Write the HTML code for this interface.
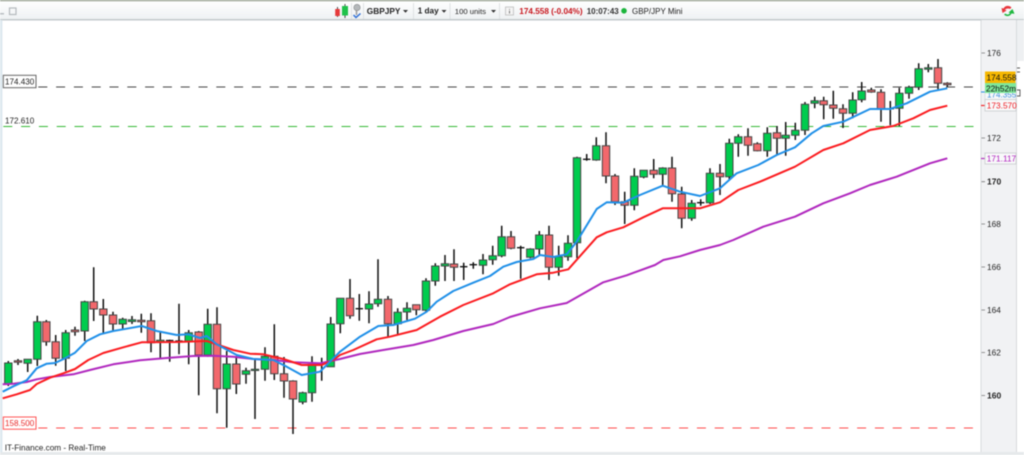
<!DOCTYPE html>
<html><head><meta charset="utf-8"><title>GBP/JPY</title>
<style>
html,body{margin:0;padding:0;background:#fff;width:1024px;height:455px;overflow:hidden}
svg{display:block;filter:blur(.45px)}
text{font-family:"Liberation Sans",sans-serif;font-size:8.100px;fill:#222}
.b{font-weight:bold}
</style></head><body>
<svg width="1024" height="455" viewBox="0 0 1024 455" xmlns="http://www.w3.org/2000/svg">
<defs><linearGradient id="g" x1="0" y1="0" x2="0" y2="1"><stop offset="0" stop-color="#fff"/><stop offset="1" stop-color="#eef1f3"/></linearGradient></defs>
<rect width="1024" height="455" fill="#fff"/>
<!-- toolbar -->
<rect x="0" y="0" width="1024" height="20" fill="url(#g)"/>
<rect x="0" y="0" width="1024" height="1.2" fill="#8f9a88"/>
<rect x="0" y="19" width="1024" height="1.5" fill="#c3c9cc"/>
<rect x="0" y="13" width="4" height="1.5" fill="#b9bfc2"/>
<rect x="9.5" y="8" width="6.5" height="6.5" fill="none" stroke="#b5babd" stroke-width="1.2"/>
<rect x="1017" y="20" width="7" height="41" fill="#eef0f2"/>
<!-- left strip / axis -->
<rect x="0" y="20" width="2.4" height="435" fill="#dde8ef"/>
<rect x="981" y="20" width="35.5" height="432" fill="#f1f2f4"/>
<path d="M981 20V452M1016.5 20V452" stroke="#cfd3d6" stroke-width=".8" fill="none"/>
<rect x="0" y="452" width="1024" height="3" fill="#e6e9eb"/>
<path d="M1017 68h3M1017 72h3M1017 90h3v6h-3" stroke="#555" stroke-width=".9" fill="none"/>
<!-- toolbar items -->
<path d="M337.500 7V17M345 4V18" stroke="#333" stroke-width=".9"/>
<rect x="335.200" y="9" width="4.600" height="7" fill="#e63a3a"/>
<rect x="342" y="6" width="6" height="9.500" fill="#1fc24a"/>
<path d="M351.500 3V19M363.500 3V19M413.500 3V19M450 3V19M499.500 3V19" stroke="#d9dcde" stroke-width=".8"/>
<circle cx="357" cy="7.500" r="3.200" fill="#b4b8ba" stroke="#8a8e90" stroke-width=".6"/>
<path d="M356.500 10V15" stroke="#999" stroke-width="1.500"/>
<path d="M353.500 15l2.500 2.500 4.500-4" stroke="#2f6fd6" stroke-width="1.500" fill="none"/>
<text x="366.800" y="13.800" class="b" style="font-size:8.300px">GBPJPY</text>
<path d="M403 10h5l-2.500 2.800z" fill="#333"/>
<text x="417.700" y="13.500" class="b" style="font-size:8.200px">1 day</text>
<path d="M441.500 10h5l-2.500 2.800z" fill="#333"/>
<text x="454.800" y="13.800" style="font-size:7.700px">100 units</text>
<path d="M491 10h5l-2.500 2.800z" fill="#333"/>
<rect x="505.500" y="7" width="8" height="8" fill="#f4f4f4" stroke="#b5b5b5" stroke-width=".7"/>
<path d="M509.500 9V9.800M509.500 10.800V13.500" stroke="#777" stroke-width="1"/>
<text x="519.300" y="13.800" class="b" style="font-size:8.200px;fill:#c8161d">174.558 (-0.04%)</text>
<text x="586.700" y="13.800" class="b" style="font-size:8px;fill:#333">10:07:43</text>
<circle cx="624" cy="10.800" r="2.800" fill="#1cb53c"/>
<text x="632" y="13.800" style="font-size:8px">GBP/JPY Mini</text>
<path d="M1011.500 7.500C1009 5 1005 5.500 1003.500 8.500L1001.500 8l1 5 4.200-2.500-1.800-.8C1006 8.500 1008.500 8 1010 9z" fill="#e8373c"/>
<path d="M1004 14.500C1006.500 17 1010 16.500 1011.500 13.500L1014.500 13.800 1012.500 9 1008.500 12.500l1.500.5C1009 14.800 1007 15 1005.500 13.500z" fill="#20b840"/>
<!-- dashed levels -->
<path d="M38.300 87H976" stroke="#444" stroke-width="1.100" stroke-dasharray="9 8.800" fill="none"/>
<path d="M3.300 126.500H976" stroke="#35b835" stroke-width="1.100" stroke-dasharray="9 8.800" fill="none"/>
<path d="M38.300 428H976" stroke="#ff4a4a" stroke-width="1.100" stroke-dasharray="9 8.800" fill="none"/>
<rect x="3.300" y="75.300" width="32.700" height="12.400" fill="#fff" stroke="#666" stroke-width="1"/>
<text x="5" y="84.500">174.430</text>
<text x="5" y="123.500">172.610</text>
<rect x="3.300" y="417" width="32.700" height="12.200" fill="#fff" stroke="#f55" stroke-width="1"/>
<text x="5" y="426.200" style="fill:#e82a2a">158.500</text>
<text x="4.700" y="450.600" style="font-size:8.200px">IT-Finance.com - Real-Time</text>
<!-- wicks -->
<path fill="none" stroke="#111" stroke-width="1.500" d="M8.300 361V386M18 359V365M27.700 359V372M37.300 315.700V366M46.300 320V345.700M55.700 335V365.700M65.700 330V371M75 326.700V335.700M84.700 300.700V341M93.700 267.300V321M103.300 299V333.300M113 311.700V331M122.700 317.700V329M132 316V324M141.300 313.700V332.700M151 313.300V352.300M160.300 332.300V359M169.700 339.700V361.700M179 303.700V354.300M188.700 330V364.300M198.700 331V395.300M207.700 308.700V356.700M217 307.300V413.300M226.700 351V427.700M236.300 356V394M246 367.700V383.700M255 358.300V419M265 347.300V380.700M274.300 324.300V380M284 357V397.700M293 380.300V434M302.700 391.700V404.300M312 356.300V401.700M321.700 357.700V380.700M330.700 317V367M340.300 298V333.300M350 279V318.700M359.300 294V320.700M369 291.300V323.300M378 259.300V306.700M388 296V337.300M397.700 308.300V334.300M407 302.300V320M416.300 304.700V315.300M426 278.300V311.700M435.300 263.300V285.700M445 255V281M454 249.300V281M463.700 262.700V280M473.300 262.300V268.700M483 254V274.300M492.700 245.700V264.700M501.700 225.700V257.300M511 231V249.300M520.700 245.700V278.700M530.300 248.300V258.300M539.300 231V255M549 225.700V280M558.700 245.700V275.700M568 235.300V260.700M577 156.700V258.300M586.700 154V160.700M596.300 137.300V160.700M606 132.300V183.300M615 174V205M624.700 191.700V224M634.300 168.300V210.300M643.700 170V178.300M653.700 159V178.300M662.700 167.300V185.300M672 156.700V201.700M681.700 186.700V228.300M691.700 200V220.700M700.700 199.300V205.700M710 168.300V204M720 164V195M729.300 138.700V180M738.300 134.300V156.700M748 128.300V155.700M757.300 142.300V151.300M767.300 127.300V156.700M777 126V155M785.700 122V155.700M795.300 122.700V140M805 102V135M814.700 96.700V108.300M823.700 96.700V119.300M833.300 90.700V118.700M843 104.300V128M852.700 92.300V118.300M861.700 82V102.300M871.300 87.700V92.700M881 89.300V121.700M890.300 101V125.300M899.300 87.700V126M909 85.700V98.700M918.700 63.300V90M928.300 64V72.300M938 59V89.300M947.300 82.300V86.700"/>
<!-- doji -->
<path fill="none" stroke="#111" stroke-width="1.300" d="M166 340.500h7.400M175.300 341h7.400M318 363.500h7.400M355.600 308.700h7.400M460 266.700h7.400M469.600 264.700h7.400M517 247.700h7.400M583 159.300h7.400M697 202.700h7.400M886.600 108.700h7.400"/>
<!-- green bodies -->
<path fill="#00cc4e" stroke="#444" stroke-width="1" d="M4.600 363h7.400V384h-7.400zM24 359.300h7.400V363.300h-7.400zM33.600 321.700h7.400V359.300h-7.400zM62 332.700h7.400V358.300h-7.400zM81 301.700h7.400V331h-7.400zM119 319.300h7.400V324h-7.400zM128.300 319.700h7.400V321.500h-7.400zM156.600 340.300h7.400V342.300h-7.400zM185 332.700h7.400V341h-7.400zM204 324.300h7.400V355h-7.400zM223 364h7.400V388.700h-7.400zM242.300 370.700h7.400V374.300h-7.400zM251.300 369.300h7.400V370.500h-7.400zM261.300 356.300h7.400V369.300h-7.400zM299 392.700h7.400V402h-7.400zM308.300 364.300h7.400V392.700h-7.400zM327 324h7.400V366.700h-7.400zM336.600 298.300h7.400V323.700h-7.400zM365.300 304h7.400V309h-7.400zM374.300 299.300h7.400V303.700h-7.400zM394 312.300h7.400V323.700h-7.400zM403.300 308.300h7.400V312h-7.400zM422.300 281h7.400V310.300h-7.400zM431.600 266h7.400V281h-7.400zM441.300 263.700h7.400V266h-7.400zM479.300 260h7.400V265.300h-7.400zM489 255.700h7.400V259.700h-7.400zM498 236.700h7.400V255.700h-7.400zM526.600 249h7.400V257.300h-7.400zM535.600 235h7.400V249h-7.400zM555 256.700h7.400V267.300h-7.400zM564.300 243.300h7.400V256.700h-7.400zM573.300 157.700h7.400V242.700h-7.400zM592.600 145.700h7.400V160h-7.400zM630.600 176.300h7.400V205.300h-7.400zM640 170.300h7.400V177h-7.400zM659 168h7.400V174.300h-7.400zM688 203.300h7.400V218.300h-7.400zM706.300 173.300h7.400V202.700h-7.400zM725.600 143.300h7.400V176.700h-7.400zM734.600 136.700h7.400V143.300h-7.400zM763.600 133.300h7.400V150.700h-7.400zM782 135.300h7.400V138.300h-7.400zM791.600 130.300h7.400V135.300h-7.400zM801.300 104.300h7.400V130.300h-7.400zM811 100.700h7.400V103.300h-7.400zM849 100h7.400V113.300h-7.400zM858 91h7.400V99.700h-7.400zM895.600 93.300h7.400V108.300h-7.400zM905.300 87.300h7.400V93.300h-7.400zM915 68.700h7.400V87.300h-7.400zM924.600 67.700h7.400V69.300h-7.400z"/>
<!-- red bodies -->
<path fill="#f2686c" stroke="#444" stroke-width="1" d="M14.300 360.700h7.400V362.300h-7.400zM42.600 321.700h7.400V341.700h-7.400zM52 341.700h7.400V358.300h-7.400zM71.300 330h7.400V331.700h-7.400zM90 301.700h7.400V309h-7.400zM99.600 309h7.400V315h-7.400zM109.300 315h7.400V324h-7.400zM137.600 320.300h7.400V321.700h-7.400zM147.300 320.700h7.400V342.700h-7.400zM195 332h7.400V355h-7.400zM213.300 324.300h7.400V388.700h-7.400zM232.600 364h7.400V384h-7.400zM270.600 356.300h7.400V373.700h-7.400zM280.300 373.700h7.400V381h-7.400zM289.300 381h7.400V399h-7.400zM346.300 298.300h7.400V315.700h-7.400zM384.300 299.300h7.400V323.700h-7.400zM412.600 304.700h7.400V309.700h-7.400zM450.300 264h7.400V267.300h-7.400zM507.300 236.700h7.400V248.300h-7.400zM545.300 235h7.400V267.300h-7.400zM602.300 145.700h7.400V176h-7.400zM611.300 176h7.400V201.700h-7.400zM621 201.700h7.400V205.300h-7.400zM650 170.300h7.400V174.300h-7.400zM668.300 168h7.400V193.700h-7.400zM678 194h7.400V218.300h-7.400zM716.300 173.300h7.400V176.700h-7.400zM744.300 136.700h7.400V145.300h-7.400zM753.600 143.700h7.400V150.700h-7.400zM773.300 132.700h7.400V138.300h-7.400zM820 100.700h7.400V104.700h-7.400zM829.600 105h7.400V108.300h-7.400zM839.300 108.700h7.400V113.300h-7.400zM867.600 90h7.400V92h-7.400zM877.300 92.300h7.400V109h-7.400zM934.300 67.700h7.400V83.300h-7.400zM943.600 83.300h7.400V84.700h-7.400z"/>
<!-- averages -->
<path fill="none" stroke="#b028be" stroke-width="2" stroke-linejoin="round" d="M2.700 384.300L13.300 383.700 26.700 382 36.700 379.300 50 377 73.300 374.300 90 370 113.300 364.300 140 360.300 166.700 358 193.300 356 213.300 355.700 233.300 356.700 253.300 359 273.300 360 293.300 362.300 320 363.300 340 359 360 354 383.300 350 413.300 345 433.300 340 463.300 331 493.300 324 510 317 540 308.300 566.700 303 603.300 282.300 626.700 275.300 655 265 663.300 260 680 256.300 700 250 720 245 733.300 240 763.300 226.700 795 216.700 823.300 203.300 850 193.300 870 185 896.700 176.700 930 163.300 947.300 158.300"/>
<path fill="none" stroke="#fb1c20" stroke-width="2" stroke-linejoin="round" d="M2.700 398.300L16.700 394.300 30 390 36.700 384 50 377.700 63.300 373.300 75 369 88.300 360 103.300 353 123.300 347.300 141.700 342.300 176.700 342 206.700 341 216.700 344.300 233.300 350 250 353.700 263.300 354.300 283.300 359 301.700 365 321.700 365 333.300 360 340 355 353.300 350 376.700 339.300 390 336.700 416.700 330 440 316.700 463.300 305 493.300 293.300 510 284.300 536.700 274.300 553.300 272.700 568.300 269.300 596.700 237.300 606.700 232.300 623.300 227.300 643.300 217.300 662.700 208.300 700 208.300 720 202.300 738.300 190 760 181.700 795 166.700 823.300 150 843.300 143.300 870 130 893.300 126 913.300 118.300 930 110 947.300 105.700"/>
<path fill="none" stroke="#2090e8" stroke-width="2" stroke-linejoin="round" d="M2.700 391.700L13.300 386.300 26.700 380.300 36.700 368.300 46.700 363.700 55 363 65 358.300 75 352.700 86.700 341 100 334.300 113.300 331 126.700 328.700 141.700 326 156.700 331 176.700 335 188.300 334.300 200 338 206.700 336 216.700 344.300 236.700 355 253.300 359 273.300 360 286.700 366.700 301.700 375 320 371.700 328.300 363.300 340 351.700 346.700 346.700 360 336.700 378.300 326 393.300 325 415 318.700 426.700 311.700 436.700 301.700 453.300 291 473.300 282.700 490 276 503.300 266.700 516.700 262 533.300 259 540 255 553.300 257 566.700 254.300 576.700 241.700 596.700 209 606.700 202.300 623.300 202.700 640 195 662.700 185.700 680 191.700 700 196 720 188.300 736.700 173.300 758.300 165 776.700 155 795 147.300 811.700 133.300 823.300 126 843.300 121.700 870 109 890 109 906.700 103.300 930 91.700 947.300 88.300"/>
<!-- axis labels -->
<path d="M981.500 53h3.500M981.500 138h3.500M981.500 181.700h3.500M981.500 224h3.500M981.500 267h3.500M981.500 310h3.500M981.500 352.500h3.500M981.500 395.500h3.500" stroke="#777" stroke-width=".8"/>
<text x="987" y="55.800" style="font-size:8.300px">176</text>
<text x="987" y="140.800" style="font-size:8.300px">172</text>
<text x="987" y="184.700" class="b" style="font-size:8.500px">170</text>
<text x="987" y="226.800" style="font-size:8.300px">168</text>
<text x="987" y="269.800" style="font-size:8.300px">166</text>
<text x="987" y="312.800" style="font-size:8.300px">164</text>
<text x="987" y="355.300" style="font-size:8.300px">162</text>
<text x="987" y="398.500" class="b" style="font-size:8.500px">160</text>
<path d="M981 92h4" stroke="#2a90e4" stroke-width="1"/>
<path d="M981 105.500h4" stroke="#f52528" stroke-width="1.200"/>
<path d="M981 158.500h4" stroke="#b234bd" stroke-width="1.200"/>
<rect x="985" y="90" width="31" height="9.500" fill="#f7f8f9" stroke="#cfd2d4" stroke-width=".6"/>
<text x="987" y="97.500" style="fill:#3d8fdc">174.355</text>
<rect x="985" y="71.500" width="30.500" height="11.500" fill="#f6b800"/>
<text x="986.500" y="80.300" style="font-size:8.300px;fill:#111">174.558</text>
<rect x="985" y="83" width="31" height="10" fill="#7fe89a"/>
<text x="986" y="91.300" style="font-size:8.300px;fill:#111">22h52m</text>
<rect x="985" y="99.500" width="31" height="11.500" fill="#f8f9fa" stroke="#c8cbcd" stroke-width=".8"/>
<text x="986.800" y="108.300" style="font-size:8.300px;fill:#f01a20">173.570</text>
<rect x="985" y="153" width="31" height="11" fill="#f8f9fa" stroke="#c8cbcd" stroke-width=".8"/>
<text x="986.800" y="161.500" style="font-size:8.300px;fill:#b020bd">171.117</text>
</svg>
</body></html>
